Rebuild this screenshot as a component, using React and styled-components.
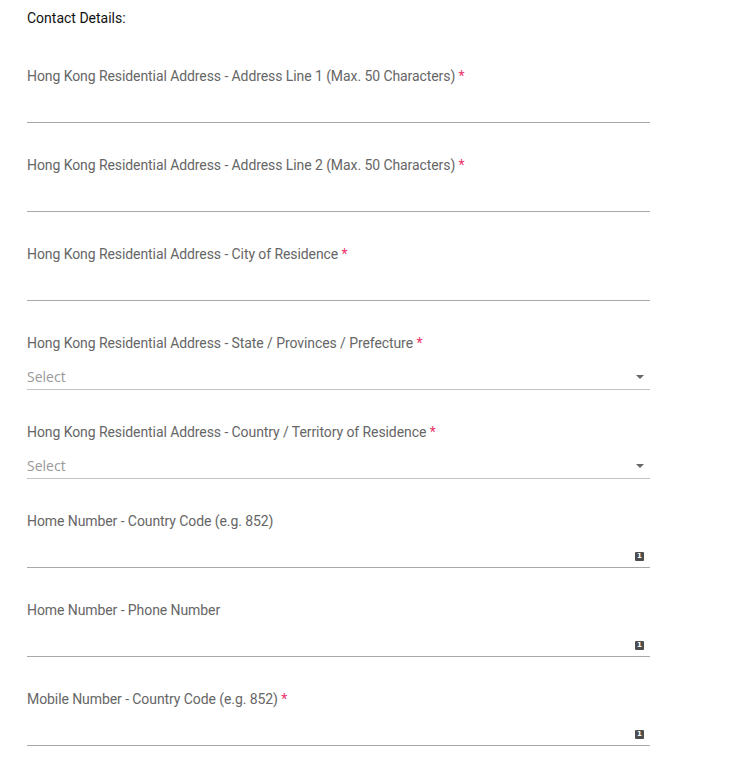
import React from 'react';
import styled, { createGlobalStyle } from 'styled-components';

const GlobalStyle = createGlobalStyle`
  html, body {
    margin: 0;
    padding: 0;
    background: #fff;
  }
  body {
    font-family: Roboto, "Liberation Sans", sans-serif;
  }
`;

const fields = [
  { label: 'Hong Kong Residential Address - Address Line 1 (Max. 50 Characters)', required: true },
  { label: 'Hong Kong Residential Address - Address Line 2 (Max. 50 Characters)', required: true },
  { label: 'Hong Kong Residential Address - City of Residence', required: true },
  { label: 'Hong Kong Residential Address - State / Provinces / Prefecture', required: true, select: true },
  { label: 'Hong Kong Residential Address - Country / Territory of Residence', required: true, select: true },
  { label: 'Home Number - Country Code (e.g. 852)', badge: true },
  { label: 'Home Number - Phone Number', badge: true },
  { label: 'Mobile Number - Country Code (e.g. 852)', required: true, badge: true },
];

const ContactDetails = () => (
  <StyledWrapper>
    <GlobalStyle />
    <Heading>Contact Details:</Heading>
    {fields.map((f) => (
      <Field key={f.label}>
        <Label>
          {f.label}
          {f.required && <Required> *</Required>}
        </Label>
        {f.select ? (
          <SelectBox>
            <Placeholder>Select</Placeholder>
            <Caret />
          </SelectBox>
        ) : (
          <InputBox>
            <TextInput type="text" />
            {f.badge && <FillBadge>1</FillBadge>}
          </InputBox>
        )}
      </Field>
    ))}
  </StyledWrapper>
);

const StyledWrapper = styled.div`
  width: 623px;
  padding: 8px 0 20px 27px;
`;

const Heading = styled.div`
  font-size: 14px;
  line-height: 20px;
  color: #111;
  margin-bottom: 37px;
`;

const Field = styled.div`
  display: flex;
  flex-direction: column;
  margin-bottom: 31px;
`;

const Label = styled.label`
  font-size: 14px;
  line-height: 22px;
  letter-spacing: -0.08px;
  color: #666;
`;

const Required = styled.span`
  color: #e8336b;
`;

const InputBox = styled.div`
  position: relative;
  height: 35px;
  border-bottom: 1px solid #a9a9a9;
`;

const TextInput = styled.input`
  width: 100%;
  height: 100%;
  box-sizing: border-box;
  border: none;
  outline: none;
  background: transparent;
  padding: 0;
  font: 14px Roboto, sans-serif;
`;

const FillBadge = styled.span`
  position: absolute;
  right: 6px;
  bottom: 6px;
  width: 9px;
  height: 9px;
  border-radius: 1px;
  background: #4d4d4d;
  color: #fff;
  display: flex;
  align-items: center;
  justify-content: center;
  font: bold 7px/1 "DejaVu Sans", sans-serif;
`;

const SelectBox = styled.div`
  height: 33px;
  display: flex;
  align-items: flex-end;
  justify-content: space-between;
  padding-bottom: 2px;
  border-bottom: 1px solid #c4c4c4;
`;

const Placeholder = styled.span`
  font-family: "Open Sans", sans-serif;
  font-size: 14px;
  line-height: 20px;
  color: #999;
`;

const Caret = styled.span`
  width: 0;
  height: 0;
  margin: 0 6px 8px 0;
  border-left: 4px solid transparent;
  border-right: 4px solid transparent;
  border-top: 4px solid #666;
`;

export default ContactDetails;
